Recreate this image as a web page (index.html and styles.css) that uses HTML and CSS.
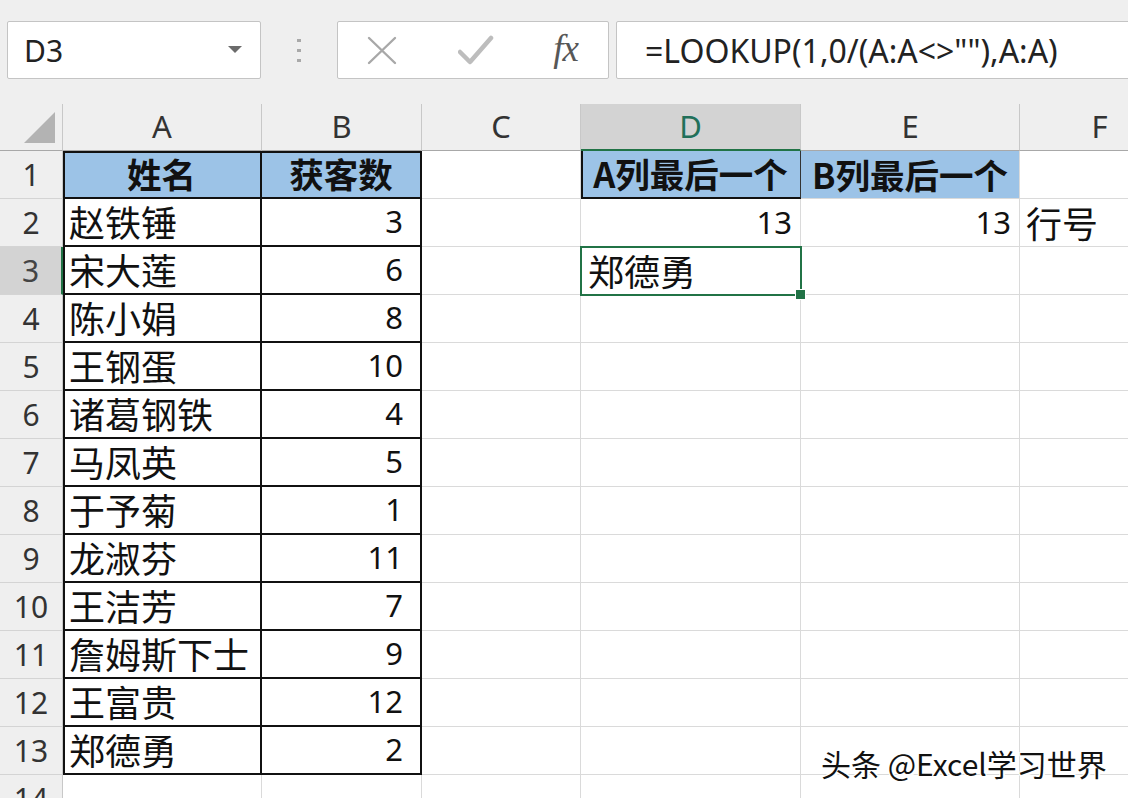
FILE: index.html
```html
<!DOCTYPE html>
<html lang="zh-CN">
<head>
    <meta charset="UTF-8">
    <title>LOOKUP 最后一个</title>
    <link rel="stylesheet" href="styles.css">
</head>
<body>
    <div class="app">
        <div class="toolbar">
            <div class="namebox">
                <span>D3</span>
                <svg class="caret" width="14" height="8" viewBox="0 0 14 8"><path d="M0 0 H14 L7 7 Z" fill="#6b6b6b"/></svg>
            </div>
            <div class="grip"><i></i><i></i><i></i></div>
            <div class="fbtns">
                <svg width="32" height="32" viewBox="0 0 32 32"><path d="M3 4 L29 29 M29 4 L3 29" stroke="#a8a8a8" stroke-width="2.4" fill="none" stroke-linecap="round"/></svg>
                <svg width="36" height="32" viewBox="0 0 36 32"><path d="M2 18 L12 28 L33 4" stroke="#bdbdbd" stroke-width="4.5" fill="none" stroke-linecap="round" stroke-linejoin="round"/></svg>
                <span class="fx">fx</span>
            </div>
            <div class="formula">=LOOKUP(1,0/(A:A&lt;&gt;""),A:A)</div>
        </div>

        <div class="sheet">
            <div class="row head">
                <div class="corner"><svg width="31" height="31" viewBox="0 0 31 31"><path d="M31 0 V31 H0 Z" fill="#b3b3b3"/></svg></div>
                <div class="col">A</div>
                <div class="col">B</div>
                <div class="col">C</div>
                <div class="col sel">D</div>
                <div class="col">E</div>
                <div class="col">F</div>
            </div>
            <div class="row">
                <div class="rh">1</div>
                <div class="c bx hd top left">姓名</div>
                <div class="c bx hd top">获客数</div>
                <div class="c"></div>
                <div class="c hd dbox">A列最后一个</div>
                <div class="c hd">B列最后一个</div>
                <div class="c"></div>
            </div>
            <div class="row">
                <div class="rh">2</div>
                <div class="c bx tx left">赵铁锤</div>
                <div class="c bx num">3</div>
                <div class="c"></div>
                <div class="c num">13</div>
                <div class="c num">13</div>
                <div class="c tx">行号</div>
            </div>
            <div class="row">
                <div class="rh sel">3</div>
                <div class="c bx tx left">宋大莲</div>
                <div class="c bx num">6</div>
                <div class="c"></div>
                <div class="c tx active">郑德勇</div>
                <div class="c"></div>
                <div class="c"></div>
            </div>
            <div class="row">
                <div class="rh">4</div>
                <div class="c bx tx left">陈小娟</div>
                <div class="c bx num">8</div>
                <div class="c"></div><div class="c"></div><div class="c"></div><div class="c"></div>
            </div>
            <div class="row">
                <div class="rh">5</div>
                <div class="c bx tx left">王钢蛋</div>
                <div class="c bx num">10</div>
                <div class="c"></div><div class="c"></div><div class="c"></div><div class="c"></div>
            </div>
            <div class="row">
                <div class="rh">6</div>
                <div class="c bx tx left">诸葛钢铁</div>
                <div class="c bx num">4</div>
                <div class="c"></div><div class="c"></div><div class="c"></div><div class="c"></div>
            </div>
            <div class="row">
                <div class="rh">7</div>
                <div class="c bx tx left">马凤英</div>
                <div class="c bx num">5</div>
                <div class="c"></div><div class="c"></div><div class="c"></div><div class="c"></div>
            </div>
            <div class="row">
                <div class="rh">8</div>
                <div class="c bx tx left">于予菊</div>
                <div class="c bx num">1</div>
                <div class="c"></div><div class="c"></div><div class="c"></div><div class="c"></div>
            </div>
            <div class="row">
                <div class="rh">9</div>
                <div class="c bx tx left">龙淑芬</div>
                <div class="c bx num">11</div>
                <div class="c"></div><div class="c"></div><div class="c"></div><div class="c"></div>
            </div>
            <div class="row">
                <div class="rh">10</div>
                <div class="c bx tx left">王洁芳</div>
                <div class="c bx num">7</div>
                <div class="c"></div><div class="c"></div><div class="c"></div><div class="c"></div>
            </div>
            <div class="row">
                <div class="rh">11</div>
                <div class="c bx tx left">詹姆斯下士</div>
                <div class="c bx num">9</div>
                <div class="c"></div><div class="c"></div><div class="c"></div><div class="c"></div>
            </div>
            <div class="row">
                <div class="rh">12</div>
                <div class="c bx tx left">王富贵</div>
                <div class="c bx num">12</div>
                <div class="c"></div><div class="c"></div><div class="c"></div><div class="c"></div>
            </div>
            <div class="row">
                <div class="rh">13</div>
                <div class="c bx tx left">郑德勇</div>
                <div class="c bx num">2</div>
                <div class="c"></div><div class="c"></div><div class="c"></div><div class="c"></div>
            </div>
            <div class="row">
                <div class="rh">14</div>
                <div class="c"></div><div class="c"></div><div class="c"></div><div class="c"></div><div class="c"></div><div class="c"></div>
            </div>
        </div>

        <div class="mark">头条 @Excel学习世界</div>
    </div>
</body>
</html>
```

FILE: styles.css
```css
body {
    margin: 0;
    padding: 0;
    overflow: hidden;
    background: #fff;
    font-family: "Noto Sans", "Noto Sans CJK SC", sans-serif;
    color: #1a1a1a;
}
.app {
    position: relative;
    width: 1128px;
    height: 798px;
    overflow: hidden;
}
.toolbar {
    display: flex;
    align-items: flex-start;
    height: 104px;
    padding: 21px 0 0 7px;
    box-sizing: border-box;
    background: #efefef;
}
.namebox, .fbtns, .formula {
    height: 58px;
    box-sizing: border-box;
    background: #fff;
    border: 1px solid #c4c4c4;
    border-radius: 2px;
    display: flex;
    align-items: center;
}
.namebox {
    width: 254px;
    padding: 0 18px 0 16px;
    justify-content: space-between;
    font-size: 30px;
    color: #222;
}
.grip {
    width: 76px;
    height: 58px;
    display: flex;
    flex-direction: column;
    align-items: center;
    justify-content: center;
    gap: 7px;
}
.grip i {
    display: block;
    width: 4px;
    height: 3px;
    background: #a9a9a9;
}
.fbtns {
    width: 272px;
    padding: 0 30px 0 28px;
    justify-content: space-between;
}
.fx {
    font-family: "Liberation Serif", serif;
    font-style: italic;
    font-size: 37px;
    color: #575757;
    letter-spacing: -1px;
    padding-bottom: 4px;
}
.formula {
    flex: 1;
    margin: 0 -10px 0 7px;
    padding-left: 28px;
    font-size: 32px;
    color: #222;
}

.sheet {
    width: 1180px;
}
.row {
    display: grid;
    grid-template-columns: 63px 199px 160px 159px 220px 219px 160px;
    grid-template-rows: 48px;
    height: 48px;
    line-height: 1.2;
}
.row.head {
    grid-template-rows: 47px;
    height: 47px;
    background: #efefef;
}
.corner {
    display: flex;
    align-items: flex-end;
    justify-content: flex-end;
    padding: 0 7px 7px 0;
    border-right: 1px solid #c8c8c8;
    border-bottom: 1px solid #a8a8a8;
}
.col {
    display: flex;
    align-items: center;
    justify-content: center;
    font-size: 31px;
    color: #333;
    border-right: 1px solid #c8c8c8;
    border-bottom: 1px solid #a8a8a8;
}
.col.sel {
    background: #d3d3d3;
    color: #21705a;
    border-bottom: 2px solid #217346;
}
.rh {
    display: flex;
    align-items: center;
    justify-content: center;
    font-size: 30px;
    color: #333;
    background: #efefef;
    border-right: 1px solid #c8c8c8;
    border-bottom: 1px solid #d4d4d4;
}
.rh.sel {
    background: #d3d3d3;
    border-right: 2px solid #217346;
    color: #444;
}
.c {
    display: flex;
    align-items: center;
    box-sizing: border-box;
    border-right: 1px solid #dadada;
    border-bottom: 1px solid #dadada;
    min-width: 0;
    white-space: nowrap;
}
.bx {
    border-right: 2px solid #111;
    border-bottom: 2px solid #111;
}
.bx.left {
    box-shadow: inset 2px 0 #111;
}
.bx.top {
    box-shadow: inset 0 2px #111;
}
.bx.top.left {
    box-shadow: inset 2px 0 #111, inset 0 2px #111;
}
.hd {
    justify-content: center;
    background: #9cc3e7;
    font-family: "Noto Sans CJK SC", sans-serif;
    font-weight: bold;
    font-size: 34.5px;
    color: #111;
}
.dbox {
    box-shadow: inset 2px 0 #111;
    border-right: 1px solid #333;
    border-bottom: 2px solid #111;
}
.tx {
    padding-left: 6px;
    font-family: "Noto Sans CJK SC", sans-serif;
    font-size: 36px;
    color: #111;
}
.num {
    justify-content: flex-end;
    padding-right: 8px;
    font-size: 31px;
    color: #111;
}
.bx.num {
    padding-right: 17px;
}
.active {
    position: relative;
    outline: 2px solid #217346;
    outline-offset: -1px;
    padding-left: 7px;
}
.active::after {
    content: "";
    position: absolute;
    right: -6px;
    bottom: -6px;
    width: 9px;
    height: 9px;
    background: #217346;
    border: 1px solid #fff;
}
.mark {
    position: absolute;
    left: 821px;
    top: 741px;
    font-family: "Noto Sans CJK SC", sans-serif;
    font-size: 30px;
    color: #111;
    text-shadow: 2px 2px 0 #fff, -1px -1px 0 #fff, 1px -1px 0 #fff, -1px 1px 0 #fff;
}
```
